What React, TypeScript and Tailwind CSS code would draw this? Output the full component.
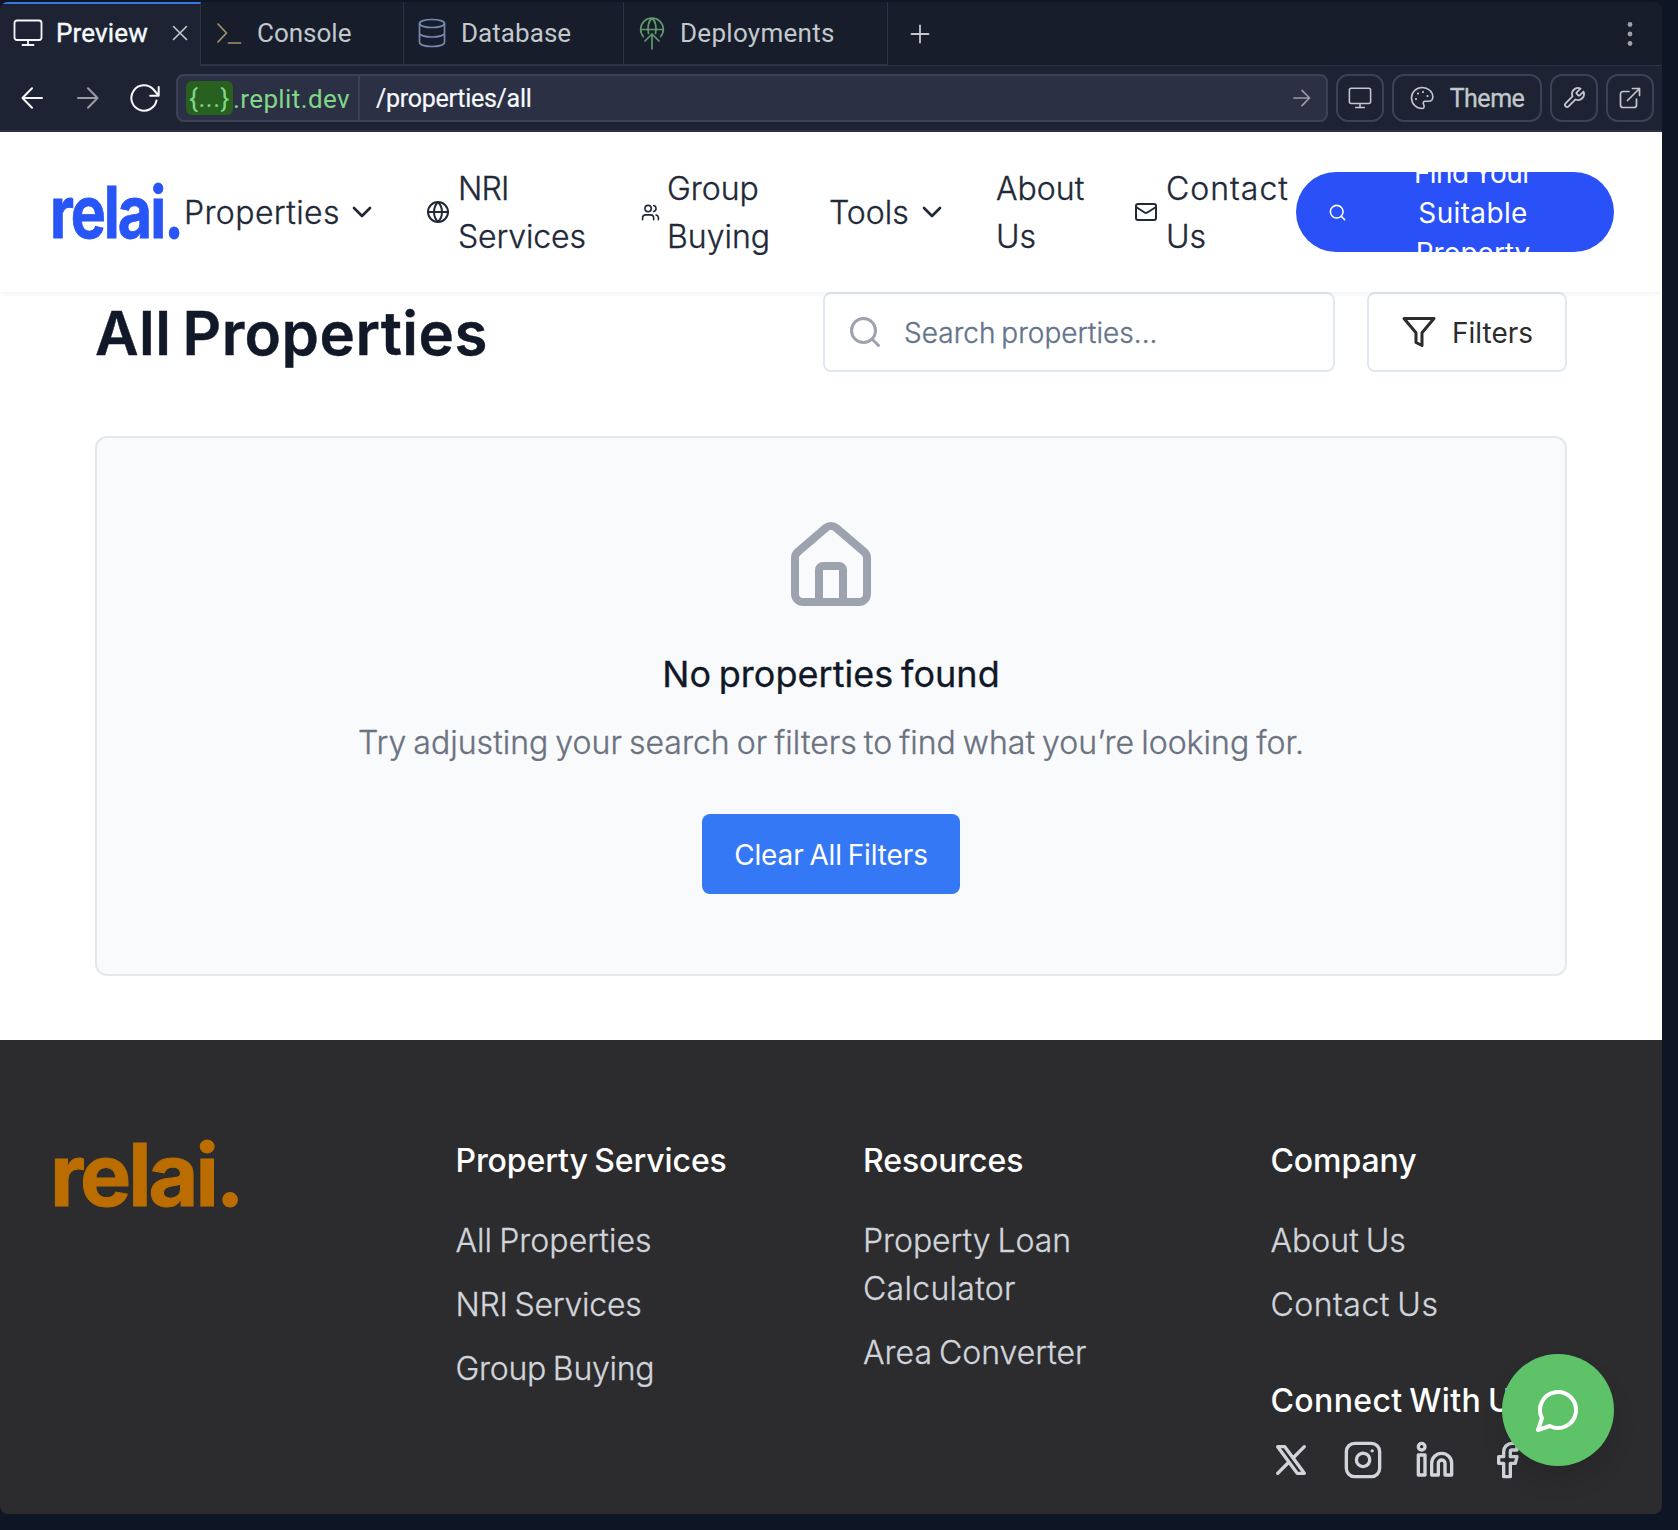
import type { ReactNode } from "react";
import { ChevronDown, Globe, House, Mail, Search, Users } from "lucide-react";

type StrokeProps = { box: string; w: number; h: number; sw: number; className?: string; children: ReactNode };

function Stroke({ box, w, h, sw, className = "", children }: StrokeProps) {
  return (
    <svg viewBox={box} width={w} height={h} fill="none" stroke="currentColor" strokeWidth={sw} strokeLinecap="round" strokeLinejoin="round" className={`shrink-0 ${className}`}>
      {children}
    </svg>
  );
}

function MonitorIcon({ w, h, sw }: { w: number; h: number; sw: number }) {
  return (
    <Stroke box="0 0 30 28" w={w} h={h} sw={sw}>
      <rect x="1.5" y="1.5" width="27" height="19.5" rx="2.5" />
      <path d="M15 21v5M9.5 26h11" />
    </Stroke>
  );
}

function TabBar() {
  return (
    <div className="flex h-16 bg-[#171d2b]">
      <div className="flex w-[201px] shrink-0 items-center border-t-2 border-r border-t-[#3578e5] border-r-[#2b3245] bg-[#1d2333] pb-1 pl-[13px] text-[#f5f9fc]">
        <MonitorIcon w={30} h={28} sw={1.8} />
        <span className="ml-[13px] text-[26px] tracking-[0.15px] [-webkit-text-stroke:0.4px]">Preview</span>
        <Stroke box="0 0 16 16" w={16} h={16} sw={1.6} className="ml-[24px] text-[#c2c8cc]">
          <path d="M1.500 1.500l13 13M14.500 1.500l-13 13" />
        </Stroke>
      </div>
      <div className="flex w-[203px] shrink-0 items-center border-r border-b-2 border-[#2b3245] pl-[15px] text-[#c2c8cc]">
        <Stroke box="0 0 26 24" w={26} h={24} sw={1.7} className="text-[#a09764]">
          <path d="M2 3l8.500 9L2 21M12.500 22h12" />
        </Stroke>
        <span className="ml-[15px] text-[26px]">Console</span>
      </div>
      <div className="flex w-[220px] shrink-0 items-center border-r border-b-2 border-[#2b3245] pl-[14px] text-[#c2c8cc]">
        <Stroke box="0 0 28 30" w={28} h={30} sw={1.7} className="text-[#7388ae]">
          <ellipse cx="14" cy="5.500" rx="12.500" ry="4" />
          <path d="M1.500 5.500v19c0 2.200 5.600 4 12.500 4s12.500-1.800 12.500-4v-19M1.500 15c0 2.200 5.600 4 12.500 4s12.500-1.800 12.500-4" />
        </Stroke>
        <span className="ml-[15px] text-[26px] tracking-[0.05px]">Database</span>
      </div>
      <div className="flex w-[264px] shrink-0 items-center border-r border-b-2 border-[#2b3245] pl-[15px] text-[#c2c8cc]">
        <Stroke box="0 0 26 34" w={26} h={34} sw={1.7} className="text-[#609a6c]">
          <path d="M4.300 20.500a11.300 11.300 0 1 1 17.400 0M1.700 13.500h22.600M9.500 17.500c-1.300-5.500-.3-12.500 3.500-15.200 3.800 2.700 4.800 9.700 3.500 15.200M13 33V18.500M6 25l7-7 7 7" />
        </Stroke>
        <span className="ml-[15px] text-[26px] tracking-[0.28px]">Deployments</span>
      </div>
      <div className="flex flex-1 items-center justify-between border-b border-[#2b3245] pr-[29px] pl-[22px] text-[#c2c8cc]">
        <Stroke box="0 0 20 20" w={20} h={20} sw={1.8}>
          <path d="M10 1.500v17M1.500 10h17" />
        </Stroke>
        <svg viewBox="0 0 6 24" width="6" height="24" className="fill-[#9da2a6]">
          <circle cx="3" cy="2.500" r="2.400" />
          <circle cx="3" cy="12" r="2.400" />
          <circle cx="3" cy="21.500" r="2.400" />
        </svg>
      </div>
    </div>
  );
}

function ToolButton({ className, children }: { className: string; children: ReactNode }) {
  return (
    <div className={`flex h-12 shrink-0 items-center justify-center rounded-xl border-2 border-[#3c4157] text-[#c2c8cc] ${className}`}>{children}</div>
  );
}

function Toolbar() {
  return (
    <div className="flex h-[66px] items-center gap-2 border-b-2 border-[#2b3245] bg-[#1d2333] pr-2">
      <div className="flex w-[168px] items-center text-[#f5f9fc]">
        <Stroke box="0 0 22 22" w={22} h={22} sw={2} className="ml-[21px]">
          <path d="M21 11H1.500M11 1.200L1.500 11l9.500 9.800" />
        </Stroke>
        <Stroke box="0 0 22 22" w={22} h={22} sw={2} className="ml-[34px] text-[#989ca1]">
          <path d="M1 11h19.500M11 1.200l9.500 9.800-9.500 9.800" />
        </Stroke>
        <Stroke box="0 0 30 28" w={30} h={28} sw={2} className="ml-[31px]">
          <path d="M26.500 16.500A12.700 12.700 0 1 1 23.500 5.500l5 6M28.700 3v8.700h-8.500" />
        </Stroke>
      </div>
      <div className="flex h-12 flex-1 items-center rounded-lg border-2 border-[#3c4157] bg-[#2b3044]">
        <div className="flex h-full w-[182px] items-center border-r-2 border-[#3c4157] pl-2 text-[26px] text-[#81d785]">
          <span className="flex h-[34px] w-[47px] items-center justify-center rounded-md bg-[#28601f] tracking-[0.5px]">{"{...}"}</span>
          <span className="pt-0.5 tracking-[0.39px]">.replit.dev</span>
        </div>
        <span className="ml-4 pt-0.5 text-[25px] tracking-[-0.28px] text-[#f5f9fc] [-webkit-text-stroke:0.2px]">/properties/all</span>
        <Stroke box="0 0 18 18" w={18} h={18} sw={1.7} className="mr-[15px] ml-auto text-[#989ca1]">
          <path d="M1 9h15.500M9 1.300L16.500 9 9 16.700" />
        </Stroke>
      </div>
      <ToolButton className="w-12">
        <MonitorIcon w={24} h={22} sw={2} />
      </ToolButton>
      <ToolButton className="w-[150px]">
        <Stroke box="0 0 24 24" w={24} h={24} sw={1.6}>
          <path d="M12.500 22.500c-6 .3-11-4.700-11-10.600C1.500 6 6.300 1.500 12.200 1.500S22.800 5.700 22.800 11c0 2.700-1.700 4.300-4.300 4.300h-3.300c-1.800 0-2.500 1.600-1.600 3.100.9 1.700.6 4-1.100 4.100z" />
          <path d="M6 13h.01M8 7.500h.01M13 6h.01M17.500 10h.01" strokeWidth="2.200" />
        </Stroke>
        <span className="ml-4 pt-0.5 text-[25px] tracking-[-0.5px] [-webkit-text-stroke:0.3px]">Theme</span>
      </ToolButton>
      <ToolButton className="w-12">
        <Stroke box="0 0 24 24" w={24} h={24} sw={1.8}>
          <path d="M14.700 6.300a1 1 0 0 0 0 1.400l1.600 1.600a1 1 0 0 0 1.400 0l3.770-3.770a6 6 0 0 1-7.940 7.940l-6.910 6.910a2.120 2.120 0 0 1-3-3l6.910-6.910a6 6 0 0 1 7.940-7.940l-3.760 3.760z" />
        </Stroke>
      </ToolButton>
      <ToolButton className="w-12">
        <Stroke box="0 0 22 22" w={22} h={22} sw={1.7}>
          <path d="M10 4.500H4A2.500 2.500 0 0 0 1.500 7v11A2.500 2.500 0 0 0 4 20.500h11a2.500 2.500 0 0 0 2.500-2.500v-6M13.500 1.500h7v7M20.500 1.500L8.500 13.500" />
        </Stroke>
      </ToolButton>
    </div>
  );
}

function SiteHeader() {
  return (
    <header className="relative z-10 flex h-40 items-center bg-white pl-[50px] text-[32px] leading-[48px] font-light text-[#1f2937] shadow-[0_2px_4px_rgba(0,0,0,0.05)] [-webkit-text-stroke:0.35px]">
      <div className="flex w-[134px] shrink-0 items-center">
        <span className="origin-left scale-x-[0.82] text-[72px] font-bold tracking-[-2.4px] text-[#2755f6] [-webkit-text-stroke:0.8px]">relai.</span>
      </div>
      <div className="flex w-[242px] shrink-0 items-center">
        <span className="w-[162px] translate-y-px tracking-[0.4px]">Properties</span>
        <ChevronDown size={32} />
      </div>
      <div className="flex w-[215px] shrink-0 items-center gap-2">
        <Globe size={24} />
        <span className="translate-y-px"><span className="tracking-[-0.8px]">NRI</span><br /><span className="tracking-[-0.15px]">Services</span></span>
      </div>
      <div className="flex w-[188px] shrink-0 items-center gap-[7px]">
        <Users size={19} />
        <span className="translate-y-px">Group<br />Buying</span>
      </div>
      <div className="flex w-[167px] shrink-0 items-center">
        <span className="w-[87px] translate-y-px">Tools</span>
        <ChevronDown size={32} />
      </div>
      <span className="w-[138px] shrink-0 translate-y-px">About<br />Us</span>
      <div className="flex w-[162px] shrink-0 items-center gap-2">
        <Mail size={24} />
        <span className="translate-y-px"><span className="tracking-[1px]">Contact</span><br />Us</span>
      </div>
      <div className="flex h-20 w-[318px] shrink-0 items-center overflow-hidden rounded-full bg-[#2a50f7] pl-8 text-white [-webkit-text-stroke:0]">
        <Search size={19} className="shrink-0" />
        <span className="ml-[45px] w-[162px] translate-y-px text-center text-[28px] leading-10 font-normal">
          <span className="tracking-[-0.6px] [word-spacing:-2px]">Find Your</span><br />
          <span className="tracking-[0.35px]">Suitable</span><br />Property
        </span>
      </div>
    </header>
  );
}

function Listing() {
  return (
    <main className="bg-white px-[95px] pb-16">
      <div className="flex h-20 items-center">
        <h1 className="flex-1 translate-y-px text-[60px] leading-[80px] font-semibold tracking-[0.45px] [word-spacing:-4.5px] text-[#111827] [-webkit-text-stroke:0.4px]">All Properties</h1>
        <div className="flex h-20 w-[512px] items-center rounded-lg border-2 border-[#e2e8f0] pl-[22px]">
          <Search size={36} className="text-[#9ca3af]" />
          <span className="ml-[21px] translate-y-px text-[28px] font-light tracking-[0.02px] [word-spacing:-2px] text-[#64748b] [-webkit-text-stroke:0.35px]">Search properties...</span>
        </div>
        <div className="ml-8 flex h-20 w-[200px] items-center rounded-lg border-2 border-[#e2e8f0] pl-8 text-[#2c2c2c]">
          <Stroke box="0 0 24 24" w={36} h={36} sw={2}>
            <polygon points="22 3 2 3 10 12.460 10 19 14 21 14 12.460 22 3" />
          </Stroke>
          <span className="ml-[15px] translate-y-px text-[28px] font-normal">Filters</span>
        </div>
      </div>
      <section className="mt-16 flex h-[540px] flex-col items-center rounded-xl border-2 border-[#e5e7eb] bg-[#f9fafc] pt-20">
        <House size={96} className="shrink-0 text-[#9ca3af]" />
        <h2 className="mt-8 text-[36px] leading-[56px] font-normal tracking-[0.05px] [word-spacing:-2.5px] text-[#111827] [-webkit-text-stroke:0.3px]">No properties found</h2>
        <p className="mt-4 translate-y-px text-[32px] leading-[48px] font-light tracking-[0.02px] [word-spacing:-2px] text-[#6b7280] [-webkit-text-stroke:0.35px]">Try adjusting your search or filters to find what you’re looking for.</p>
        <div className="mt-12 flex h-20 w-[258px] items-center justify-center rounded-lg bg-[#3578f6] pt-0.5 text-[28px] tracking-[-0.12px] [word-spacing:-2px] text-white">Clear All Filters</div>
      </section>
    </main>
  );
}

function Column({ title, children }: { title: string; children: ReactNode }) {
  return (
    <div className="flex flex-col">
      <h3 className="font-medium tracking-[-0.1px] [word-spacing:-2px] text-white">{title}</h3>
      <ul className="mt-8 flex flex-col gap-4 font-light [word-spacing:-2px] text-[#d1d5db] [-webkit-text-stroke:0.3px]">{children}</ul>
    </div>
  );
}

function Footer() {
  return (
    <footer className="grid h-[474px] grid-cols-4 gap-16 bg-[#2c2c2e] px-12 pt-[97px] text-[32px] leading-[48px]">
      <div className="pt-[14px] pl-0.5 text-[86px] leading-[48px] font-bold tracking-[-3px] text-[#bb6d00] [-webkit-text-stroke:1px]">relai.</div>
      <Column title="Property Services">
        <li className="tracking-[0.05px]">All Properties</li>
        <li className="tracking-[-0.25px]">NRI Services</li>
        <li className="tracking-[-0.25px]">Group Buying</li>
      </Column>
      <Column title="Resources">
        <li className="tracking-[-0.05px]">Property Loan<br /><span className="tracking-[0.3px]">Calculator</span></li>
        <li>Area Converter</li>
      </Column>
      <div>
        <Column title="Company">
          <li>About Us</li>
          <li className="tracking-[0.5px]">Contact Us</li>
        </Column>
        <h3 className="mt-12 font-medium tracking-[0.36px] [word-spacing:-2px] text-white">Connect With Us</h3>
        <div className="mt-[15px] flex gap-8 text-[#d1d5db]">
          <Stroke box="0 0 24 24" w={40} h={40} sw={2}>
            <path d="M4 4l11.733 16H20L8.267 4zM4 20l6.768-6.768m2.460-2.460L20 4" />
          </Stroke>
          <Stroke box="0 0 24 24" w={40} h={40} sw={2}>
            <rect x="2" y="2" width="20" height="20" rx="5" />
            <path d="M16 11.370A4 4 0 1 1 12.630 8 4 4 0 0 1 16 11.370zM17.500 6.500h.01" />
          </Stroke>
          <Stroke box="0 0 24 24" w={40} h={40} sw={2}>
            <path d="M16 8a6 6 0 0 1 6 6v7h-4v-7a2 2 0 0 0-4 0v7h-4v-7a6 6 0 0 1 6-6z" />
            <rect x="2" y="9" width="4" height="12" />
            <circle cx="4" cy="4" r="2" />
          </Stroke>
          <Stroke box="0 0 24 24" w={40} h={40} sw={2}>
            <path d="M18 2h-3a5 5 0 0 0-5 5v3H7v4h3v8h4v-8h3l1-4h-4V7a1 1 0 0 1 1-1h3z" />
          </Stroke>
        </div>
      </div>
    </footer>
  );
}

export default function App() {
  return (
    <div className="h-[1530px] w-[1678px] overflow-hidden bg-[#0e1525] pt-0.5 font-[Roboto,sans-serif]">
      <div className="relative h-[1512px] w-[1662px] overflow-hidden rounded-lg">
        <TabBar />
        <Toolbar />
        <div className="font-[Inter,sans-serif]">
          <SiteHeader />
          <Listing />
          <Footer />
        </div>
        <div className="absolute right-12 bottom-12 flex h-28 w-28 items-center justify-center rounded-full bg-[#5ec269] text-white shadow-[0_16px_24px_rgba(0,0,0,0.1)]">
          <Stroke box="0 0 24 24" w={48} h={48} sw={2}>
            <path d="M7.900 20A9 9 0 1 0 4 16.100L2 22Z" />
          </Stroke>
        </div>
      </div>
    </div>
  );
}
